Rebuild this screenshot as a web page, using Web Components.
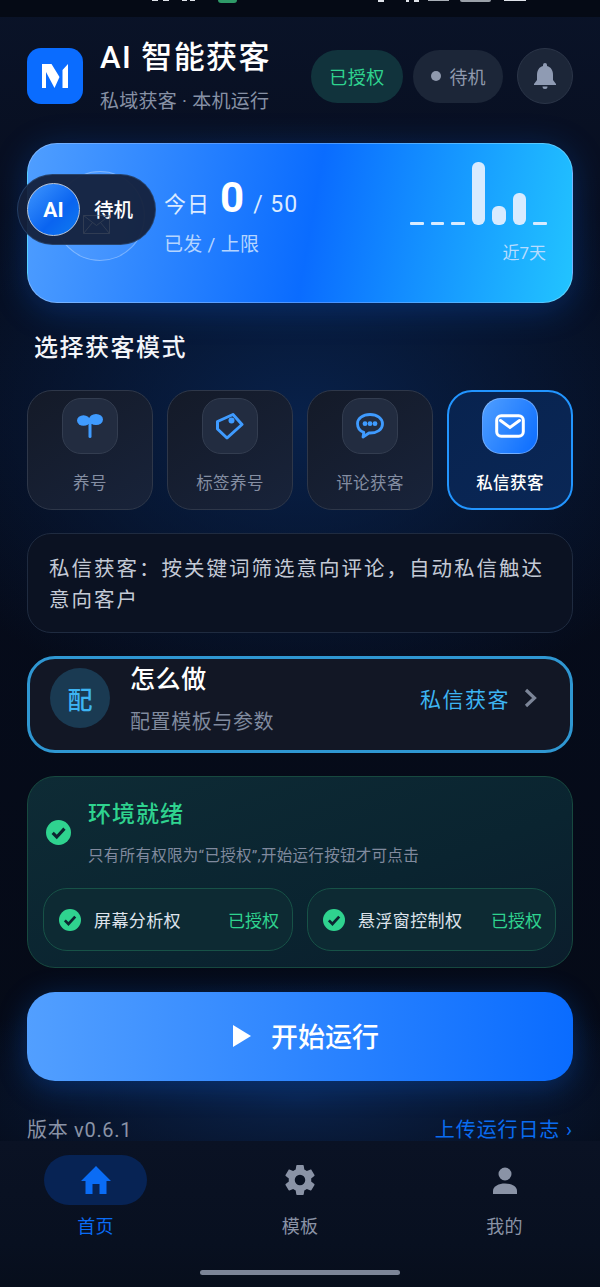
<!DOCTYPE html>
<html lang="zh">
<head>
<meta charset="utf-8">
<title>AI 智能获客</title>
<style>
  html, body { margin: 0; padding: 0; }
  body {
    width: 600px;
    height: 1287px;
    overflow: hidden;
    background: #060b18;
    color: #fff;
    font-family: Roboto, "Noto Sans CJK SC", sans-serif;
  }
</style>
</head>
<body>
<app-shell>
  <status-strip></status-strip>
  <top-header></top-header>
  <hero-card></hero-card>
  <mode-picker></mode-picker>
  <how-row></how-row>
  <env-panel></env-panel>
  <start-button>开始运行</start-button>
  <version-row></version-row>
  <tab-bar slot="tabs"></tab-bar>
</app-shell>

<script>
const check = (size) => `
  <svg width="${size}" height="${size}" viewBox="0 0 24 24" style="display:block;flex:none">
    <circle cx="12" cy="12" r="12" fill="#2fd38f"/>
    <path d="M6.400 12.400l3.900 3.900 7.400-8" fill="none" stroke="#0c2530" stroke-width="3"/>
  </svg>`;

class AppShell extends HTMLElement {
  constructor() {
    super();
    this.attachShadow({mode: "open"}).innerHTML = `
    <style>
      :host {
        display: block;
        width: 600px;
        height: 1287px;
        overflow: hidden;
        background:
          radial-gradient(ellipse 420px 300px at 300px 420px, #08214a 0%, rgba(8,33,74,0) 100%),
          radial-gradient(ellipse 400px 120px at 300px 1100px, #0a2148 0%, rgba(10,33,72,0) 100%),
          linear-gradient(#0a1328 0, #060c1c 300px, #050a16 100%);
      }
      .scroll {
        height: 1141px;
        box-sizing: border-box;
        overflow: hidden;
        padding: 0 27px;
      }
    </style>
    <div class="scroll"><slot></slot></div>
    <slot name="tabs"></slot>
    `;
  }
}

class StatusStrip extends HTMLElement {
  constructor() {
    super();
    this.attachShadow({mode: "open"}).innerHTML = `
    <style>
      :host {
        display: block;
        height: 17px;
        margin: 0 -27px;
        background: #050a15;
        overflow: hidden;
        position: relative;
      }
      i { position: absolute; top: 0; background: #dfe3ea; display: block; }
    </style>
    <i style="left:152px;width:6px;height:1px"></i>
    <i style="left:163px;width:6px;height:1px"></i>
    <i style="left:182px;width:5px;height:1px"></i>
    <i style="left:190px;width:5px;height:1px"></i>
    <i style="left:218px;width:19px;height:3px;background:#2f9a68;border-radius:0 0 3px 3px"></i>
    <i style="left:378px;width:6px;height:2px"></i>
    <i style="left:406px;width:3px;height:2px"></i>
    <i style="left:414px;width:5px;height:2px"></i>
    <i style="left:428px;width:21px;height:1px;background:#aab0b8"></i>
    <i style="left:460px;width:31px;height:2px;background:#9aa0a8;border-radius:0 0 2px 2px"></i>
    <i style="left:504px;width:22px;height:1px"></i>
    `;
  }
}

class TopHeader extends HTMLElement {
  constructor() {
    super();
    this.attachShadow({mode: "open"}).innerHTML = `
    <style>
      :host {
        display: flex;
        align-items: center;
        height: 88px;
        margin-top: 15px;
      }
      .logo {
        width: 56px; height: 56px;
        border-radius: 14px;
        background: #0a6cff;
        flex: none;
        display: grid;
        place-items: center;
      }
      .names { margin-left: 17px; flex: 1; }
      .title { font-size: 31px; line-height: 40px; font-weight: 500; letter-spacing: 1.400px; white-space: nowrap; }
      .sub { font-size: 19px; line-height: 26px; color: #8791a5; margin-top: 11px; letter-spacing: .25px; white-space: nowrap; }
      .pill {
        height: 53px;
        border-radius: 27px;
        display: flex;
        align-items: center;
        justify-content: center;
        font-size: 18px;
        flex: none;
      }
      .ok { width: 92px; background: #11333c; color: #2fd38f; letter-spacing: .5px; }
      .idle { width: 90px; margin-left: 10px; background: #1c2638; color: #8f99ad; gap: 9px; }
      .idle b { width: 10px; height: 10px; border-radius: 50%; background: #8f99ad; }
      .bell {
        width: 54px; height: 54px;
        margin-left: 14px;
        border-radius: 50%;
        background: #1c2638;
        border: 1px solid #2b3548;
        display: grid;
        place-items: center;
        flex: none;
      }
    </style>
    <div class="logo">
      <svg width="26" height="24" viewBox="0 0 26 24">
        <path fill="#fff" d="M0 0h9.500l8 13-5 11L4 8v16H0zM26 0v24h-5.500V6z"/>
      </svg>
    </div>
    <div class="names">
      <div class="title">AI 智能获客</div>
      <div class="sub">私域获客 · 本机运行</div>
    </div>
    <div class="pill ok">已授权</div>
    <div class="pill idle"><b></b>待机</div>
    <div class="bell">
      <svg width="24" height="28" viewBox="0 0 24 28">
        <path fill="#8f9bb3" d="M12 1a2 2 0 0 1 2 2v1c4 1 6 4.500 6 9v5l3 4v1H1v-1l3-4v-5c0-4.500 2-8 6-9V3a2 2 0 0 1 2-2z"/>
        <path fill="#8f9bb3" d="M9.500 24.500h5a2.500 2.500 0 0 1-5 0z"/>
      </svg>
    </div>
    `;
  }
}

class HeroCard extends HTMLElement {
  constructor() {
    super();
    const bars = [3, 3, 3, 63, 19, 32, 3];
    this.attachShadow({mode: "open"}).innerHTML = `
    <style>
      :host {
        display: block;
        position: relative;
        height: 160px;
        margin-top: 23px;
        border-radius: 30px;
        box-sizing: border-box;
        border: 1px solid rgba(255,255,255,.25);
        background: linear-gradient(100deg, #4f9eff 0%, #0a6cff 52%, #22c4ff 100%);
        box-shadow: 0 6px 34px rgba(10,108,255,.28);
      }
      .inner {
        display: flex;
        align-items: center;
        height: 100%;
        padding: 0 25px 0 136px;
      }
      .today { flex: 1; margin-top: -16px; }
      .row { display: flex; align-items: baseline; color: #dcebff; font-size: 23px; height: 52px; white-space: nowrap; }
      .row .d { font-size: 22px; letter-spacing: 1px; }
      .row strong { font-size: 42px; font-weight: 700; color: #fff; margin: 0 9px 0 10px; line-height: 52px; }
      .row .n { letter-spacing: 1px; }
      .limit { font-size: 19px; color: #b5d5ff; line-height: 26px; margin-top: 8px; letter-spacing: .3px; }
      .chart { width: 137px; margin-top: -20px; }
      .bars { display: flex; align-items: flex-end; gap: 7px; height: 64px; }
      .bars i { width: 13.500px; background: #d8ebff; border-radius: 6px; display: block; }
      .bars i.flat { border-radius: 1px; }
      .near { text-align: right; font-size: 17px; color: #b7dcff; margin-top: 16px; padding-right: 1px; line-height: 24px; }
      .disc {
        position: absolute; left: 27px; top: 27px;
        width: 90px; height: 90px; border-radius: 50%;
        border: 1px solid rgba(255,255,255,.3);
        background: rgba(255,255,255,.06);
        box-sizing: border-box;
      }
      .float {
        position: absolute; left: -11px; top: 30px;
        width: 139px; height: 71px;
        border-radius: 36px;
        background: rgba(20,32,58,.94);
        border: 1px solid rgba(70,120,180,.35);
        box-sizing: border-box;
        display: flex; align-items: center;
        padding-left: 9px;
      }
      .ai {
        width: 53px; height: 53px; box-sizing: border-box;
        border-radius: 50%;
        border: 1.500px solid #b9c7dc;
        background: linear-gradient(135deg, #3e96ff, #0a64f0 60%, #0f7bf0);
        display: grid; place-items: center;
        font-weight: 700; font-size: 21px;
      }
      .float span { margin-left: 14px; margin-bottom: 2px; font-size: 19.500px; font-weight: 500; }
      .env { position: absolute; left: 55px; top: 71px; opacity: .5; }
    </style>
    <div class="disc"></div>
    <div class="float"><div class="ai">AI</div><span>待机</span></div>
    <svg class="env" width="27" height="19" viewBox="0 0 27 19">
      <path d="M.5 .5h26v18H.5zM.5 .5l13 10 13-10M.5 18.500l9-11M26.500 18.500l-9-11" fill="none" stroke="#4a5260" stroke-width="1"/>
    </svg>
    <div class="inner">
      <div class="today">
        <div class="row"><span class="d">今日</span><strong>0</strong><span class="n">/ 50</span></div>
        <div class="limit">已发 / 上限</div>
      </div>
      <div class="chart">
        <div class="bars">${bars.map(h => `<i class="${h < 5 ? "flat" : ""}" style="height:${h}px"></i>`).join("")}</div>
        <div class="near">近7天</div>
      </div>
    </div>
    `;
  }
}

const modeIcons = {
  sprout: `<svg width="26" height="24" viewBox="0 0 26 24"><ellipse cx="6.500" cy="6.500" rx="6.500" ry="5.200" fill="#3f9bff"/><ellipse cx="19" cy="5.500" rx="7" ry="5.500" fill="#3f9bff"/><rect x="10" y="4" width="6" height="6" fill="#3f9bff"/><rect x="11.500" y="6" width="3" height="18" rx="1.500" fill="#3f9bff"/></svg>`,
  tag: `<svg width="28" height="27" viewBox="0 0 28 27"><path d="M1.500 8.500L17 1.500l9 10L11 25l-9.500-9z" fill="none" stroke="#3f9bff" stroke-width="3" stroke-linejoin="round"/><circle cx="15.500" cy="7.500" r="3" fill="#3f9bff"/></svg>`,
  chat: `<svg width="28" height="26" viewBox="0 0 28 26"><path d="M14 1.500c7.200 0 12.500 4 12.500 9.500S21 20 14 20h-1l-6 4 .8-4.600C3.800 18 1.500 14.500 1.500 10.500 1.500 5.500 6.800 1.500 14 1.500z" fill="none" stroke="#3f9bff" stroke-width="2.800" stroke-linejoin="round"/><circle cx="9" cy="10.700" r="2.400" fill="#3f9bff"/><circle cx="14" cy="10.700" r="2.400" fill="#3f9bff"/><circle cx="19" cy="10.700" r="2.400" fill="#3f9bff"/></svg>`,
  mail: `<svg width="30" height="24" viewBox="0 0 30 24"><rect x="1.700" y="1.700" width="26.600" height="20.600" rx="4.500" fill="none" stroke="#fff" stroke-width="3"/><path d="M5.500 6.500L15 13.500l9.500-7" fill="none" stroke="#fff" stroke-width="3" stroke-linecap="round"/></svg>`
};

class ModeCard extends HTMLElement {
  constructor() {
    super();
    this.attachShadow({mode: "open"}).innerHTML = `
    <style>
      :host {
        display: flex;
        flex-direction: column;
        align-items: center;
        box-sizing: border-box;
        height: 120px;
        padding-top: 7px;
        border-radius: 25px;
        border: 1px solid #2e3749;
        background: linear-gradient(145deg, #141a28, #18233a);
        color: #848ea2;
        font-size: 16.500px;
      }
      :host([active]) {
        border: 2px solid #2295ff;
        padding-top: 6px;
        background: linear-gradient(145deg, #08234f, #0a2756);
        color: #fff;
        font-weight: 500;
      }
      .box {
        width: 56px; height: 56px; box-sizing: border-box;
        border-radius: 19px;
        border: 1px solid #333d50;
        background: #222c40;
        display: grid; place-items: center;
      }
      :host([active]) .box {
        border: 1px solid rgba(255,255,255,.3);
        background: linear-gradient(120deg, #4f9eff, #0a6cff);
      }
      .label { margin-top: 18px; line-height: 24px; letter-spacing: .4px; }
    </style>
    <div class="box">${modeIcons[this.getAttribute("icon")]}</div>
    <div class="label"><slot></slot></div>
    `;
  }
}

class ModePicker extends HTMLElement {
  constructor() {
    super();
    this.attachShadow({mode: "open"}).innerHTML = `
    <style>
      :host { display: block; }
      h2 {
        margin: 28px 0 0 7px;
        font-size: 24px; line-height: 34px; font-weight: 500; letter-spacing: 1.500px;
        color: #f3f5f9;
      }
      .grid {
        display: grid;
        grid-template-columns: repeat(4, 126px);
        gap: 14px;
        margin-top: 25px;
      }
      .desc {
        margin-top: 23px;
        height: 100px;
        box-sizing: border-box;
        padding: 20px 20px 0 21px;
        border-radius: 24px;
        border: 1px solid #1f2b40;
        background: #0b1222;
        color: #c4cad6;
        font-size: 20.500px;
        line-height: 31px;
        letter-spacing: 2px;
      }
    </style>
    <h2>选择获客模式</h2>
    <div class="grid">
      <mode-card icon="sprout">养号</mode-card>
      <mode-card icon="tag">标签养号</mode-card>
      <mode-card icon="chat">评论获客</mode-card>
      <mode-card icon="mail" active>私信获客</mode-card>
    </div>
    <div class="desc">私信获客：按关键词筛选意向评论，自动私信触达意向客户</div>
    `;
  }
}

class HowRow extends HTMLElement {
  constructor() {
    super();
    this.attachShadow({mode: "open"}).innerHTML = `
    <style>
      :host {
        display: flex;
        align-items: center;
        height: 97px;
        margin-top: 23px;
        box-sizing: border-box;
        padding: 0 33px 13px 20px;
        border-radius: 28px;
        border: 3px solid #2f97d2;
        background: #121725;
      }
      .circle {
        width: 60px; height: 60px; border-radius: 50%;
        background: #1a3a52; color: #3db4f2;
        display: grid; place-items: center;
        font-size: 25px; font-weight: 500;
        flex: none;
      }
      .text { margin-left: 20px; flex: 1; }
      .t { font-size: 25px; line-height: 36px; font-weight: 500; letter-spacing: .6px; }
      .s { font-size: 20px; line-height: 26px; color: #808a9e; margin-top: 11px; letter-spacing: .6px; }
      .go { color: #3db4f2; font-size: 21px; letter-spacing: 1.500px; }
      svg { margin-left: 14px; flex: none; }
    </style>
    <div class="circle">配</div>
    <div class="text">
      <div class="t">怎么做</div>
      <div class="s">配置模板与参数</div>
    </div>
    <div class="go">私信获客</div>
    <svg width="13" height="20" viewBox="0 0 13 20"><path d="M2 2l8.500 8L2 18" fill="none" stroke="#7c8598" stroke-width="3.200"/></svg>
    `;
  }
}

class PermItem extends HTMLElement {
  constructor() {
    super();
    this.attachShadow({mode: "open"}).innerHTML = `
    <style>
      :host {
        display: flex;
        align-items: center;
        height: 63px;
        box-sizing: border-box;
        padding: 0 13px 0 15px;
        border-radius: 24px;
        border: 1px solid #175247;
        background: #0d2a33;
      }
      .name { margin-left: 13px; flex: 1; font-size: 17px; color: #dfe4ec; letter-spacing: .4px; white-space: nowrap; }
      .state { color: #2fd38f; font-size: 17px; white-space: nowrap; }
    </style>
    ${check(22)}
    <span class="name"><slot></slot></span>
    <span class="state">已授权</span>
    `;
  }
}

class EnvPanel extends HTMLElement {
  constructor() {
    super();
    this.attachShadow({mode: "open"}).innerHTML = `
    <style>
      :host {
        display: block;
        height: 192px;
        margin-top: 23px;
        box-sizing: border-box;
        padding: 0 15px;
        border-radius: 28px;
        border: 1px solid #17493f;
        background: linear-gradient(160deg, #0e2b35, #0a2430 60%, #0b1d2c);
      }
      .head { display: flex; align-items: center; height: 111px; padding-left: 3px; }
      .copy { margin-left: 17px; }
      .t { font-size: 23px; font-weight: 500; line-height: 32px; color: #2fd38f; letter-spacing: 1px; }
      .s { font-size: 15.500px; line-height: 22px; color: #808a9e; margin-top: 14px; letter-spacing: .3px; white-space: nowrap; }
      .perms { display: grid; grid-template-columns: 250px 249px; gap: 14px; }
    </style>
    <div class="head">
      ${check(25)}
      <div class="copy">
        <div class="t">环境就绪</div>
        <div class="s">只有所有权限为“已授权”,开始运行按钮才可点击</div>
      </div>
    </div>
    <div class="perms">
      <perm-item>屏幕分析权</perm-item>
      <perm-item>悬浮窗控制权</perm-item>
    </div>
    `;
  }
}

class StartButton extends HTMLElement {
  constructor() {
    super();
    this.attachShadow({mode: "open"}).innerHTML = `
    <style>
      :host {
        display: flex;
        align-items: center;
        justify-content: center;
        gap: 20px;
        height: 89px;
        box-sizing: border-box;
        padding: 0 0 2px 12px;
        margin-top: 24px;
        border-radius: 28px;
        background: linear-gradient(90deg, #529fff, #0a6cff);
        box-shadow: 0 6px 30px rgba(10,108,255,.3);
        font-size: 27px;
        font-weight: 500;
      }
    </style>
    <svg width="18" height="22" viewBox="0 0 18 22"><path d="M0 0l18 11L0 22z" fill="#fff"/></svg>
    <slot></slot>
    `;
  }
}

class VersionRow extends HTMLElement {
  constructor() {
    super();
    this.attachShadow({mode: "open"}).innerHTML = `
    <style>
      :host {
        display: flex;
        justify-content: space-between;
        align-items: center;
        margin-top: 34px;
        font-size: 20px;
        line-height: 30px;
      }
      .v { color: #8a93a6; letter-spacing: .7px; }
      .u { color: #0a6cf0; letter-spacing: .9px; }
    </style>
    <span class="v">版本 v0.6.1</span>
    <span class="u">上传运行日志 ›</span>
    `;
  }
}

class TabBar extends HTMLElement {
  constructor() {
    super();
    this.attachShadow({mode: "open"}).innerHTML = `
    <style>
      :host {
        display: block;
        position: relative;
        height: 146px;
        background: linear-gradient(#0a1224, #081020 70%, #070e1c);
      }
      .tabs { display: grid; grid-template-columns: 191px 218px 191px; }
      .tab {
        display: flex; flex-direction: column; align-items: center;
        font-size: 18px; color: #8a93a6; padding-top: 14px;
      }
      .tab.on { color: #0a6cf5; }
      .ic { width: 103px; height: 50px; border-radius: 25px; display: grid; place-items: center; }
      .on .ic { background: #072354; }
      .tab span { margin-top: 9px; line-height: 26px; letter-spacing: .3px; }
      .bar { position: absolute; left: 200px; top: 129px; width: 200px; height: 5px; border-radius: 3px; background: #7c8598; }
    </style>
    <div class="tabs">
      <div class="tab on">
        <div class="ic"><svg width="30" height="28" viewBox="0 0 30 28"><path fill="#0a6cf5" d="M15 0l15 15h-4.500v13h-7V18h-7v10h-7V15H0z"/></svg></div>
        <span>首页</span>
      </div>
      <div class="tab">
        <div class="ic"><svg width="36" height="36" viewBox="0 0 24 24"><path fill="#8a93a6" d="M19.430 12.980c.04-.32.07-.64.07-.98s-.03-.66-.07-.98l2.110-1.650c.19-.15.24-.42.12-.64l-2-3.460c-.12-.22-.39-.3-.61-.22l-2.490 1c-.52-.4-1.080-.73-1.690-.98l-.38-2.650C14.460 2.180 14.250 2 14 2h-4c-.25 0-.46.18-.49.42l-.38 2.650c-.61.25-1.170.59-1.690.98l-2.490-1c-.23-.09-.49 0-.61.22l-2 3.460c-.13.22-.07.49.12.64l2.110 1.650c-.04.32-.07.65-.07.98s.03.66.07.98l-2.110 1.650c-.19.15-.24.420-.12.640l2 3.460c.12.220.39.3.61.220l2.490-1c.52.400 1.080.730 1.690.980l.38 2.650c.03.240.24.420.49.420h4c.25 0 .46-.18.49-.42l.38-2.650c.61-.25 1.170-.59 1.690-.98l2.490 1c.23.090.49 0 .61-.22l2-3.460c.12-.22.07-.49-.12-.64l-2.110-1.650zM12 15.500a3.500 3.500 0 1 1 0-7 3.500 3.500 0 0 1 0 7z"/></svg></div>
        <span>模板</span>
      </div>
      <div class="tab">
        <div class="ic"><svg width="26" height="27" viewBox="0 0 26 27"><circle cx="13" cy="7" r="6.500" fill="#8a93a6"/><path fill="#8a93a6" d="M1 27v-3c0-5 6-7.500 12-7.500s12 2.500 12 7.500v3z"/></svg></div>
        <span>我的</span>
      </div>
    </div>
    <div class="bar"></div>
    `;
  }
}

customElements.define("mode-card", ModeCard);
customElements.define("perm-item", PermItem);
customElements.define("app-shell", AppShell);
customElements.define("status-strip", StatusStrip);
customElements.define("top-header", TopHeader);
customElements.define("hero-card", HeroCard);
customElements.define("mode-picker", ModePicker);
customElements.define("how-row", HowRow);
customElements.define("env-panel", EnvPanel);
customElements.define("start-button", StartButton);
customElements.define("version-row", VersionRow);
customElements.define("tab-bar", TabBar);
</script>
</body>
</html>
